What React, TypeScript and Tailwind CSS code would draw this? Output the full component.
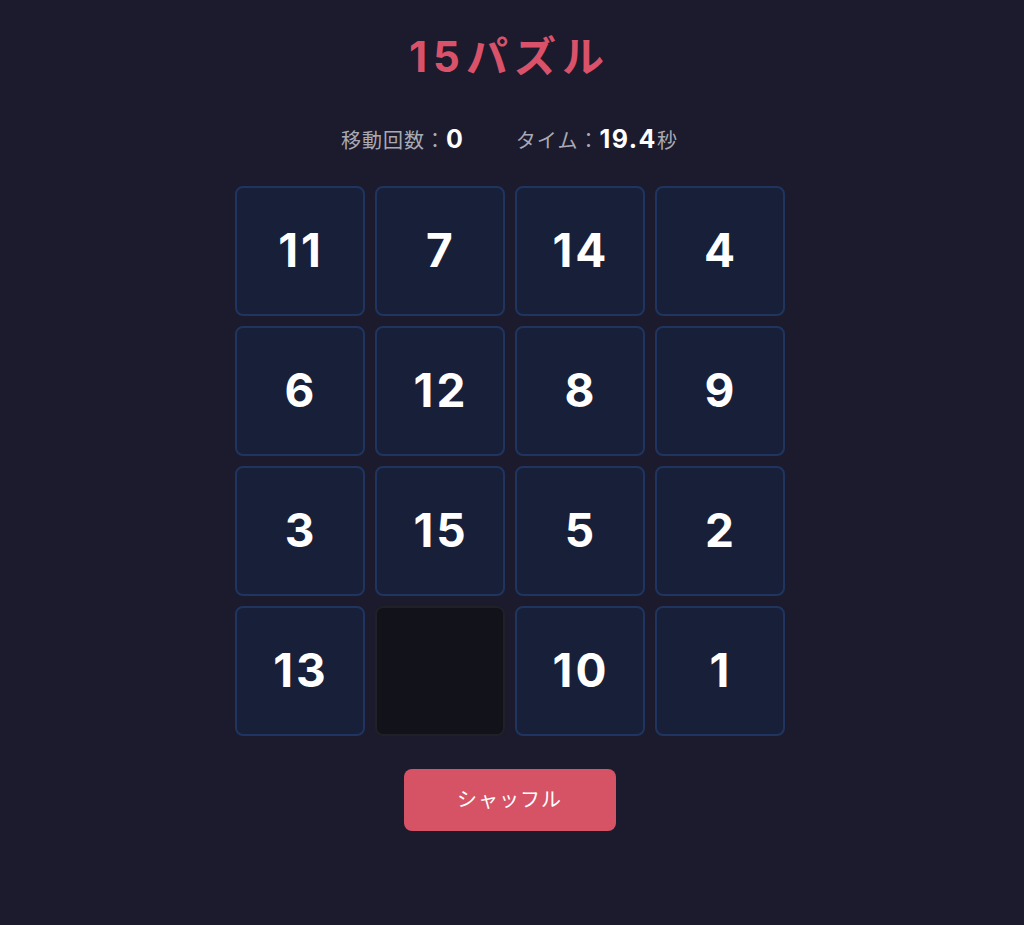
import React from 'react';

const tiles: (number | null)[] = [11, 7, 14, 4, 6, 12, 8, 9, 3, 15, 5, 2, 13, null, 10, 1];

const font = { fontFamily: 'Inter, "Noto Sans CJK JP", "Noto Sans", sans-serif' };

export default function App() {
  return (
    <div className="min-h-[925px] bg-[#1b1b2d] text-white pr-[5px]" style={font}>
      <div className="flex flex-col items-center pt-[27px]">
        <h1 className="text-[42px] font-bold leading-[60px] tracking-[6px] text-[#d9526a]">15パズル</h1>

        {/* stats */}
        <div className="mt-[34px] flex items-baseline gap-[52px] text-[20px] tracking-[1px] text-[#a9a9b3]">
          <div>
            移動回数：<span className="text-[25px] font-bold tracking-[1px] text-white">0</span>
          </div>
          <div>
            タイム：<span className="text-[25px] font-bold tracking-[1.5px] text-white">19.4</span>秒
          </div>
        </div>

        {/* board */}
        <div className="mt-[27px] grid grid-cols-4 gap-[10px]">
          {tiles.map((n, i) =>
            n === null ? (
              <div key={i} className="h-[130px] w-[130px] rounded-lg border-2 border-[#202027] bg-[#12121b]" />
            ) : (
              <div
                key={i}
                className="flex h-[130px] w-[130px] items-center justify-center rounded-lg border-2 border-[#1f3560] bg-[#182039] pl-[3px] text-[46px] font-bold tracking-[3px]"
              >
                {n}
              </div>
            )
          )}
        </div>

        <button className="mt-[33px] h-[62px] w-[212px] rounded-lg bg-[#d65265] text-[20px] tracking-[1px] text-white">
          シャッフル
        </button>
      </div>
    </div>
  );
}
